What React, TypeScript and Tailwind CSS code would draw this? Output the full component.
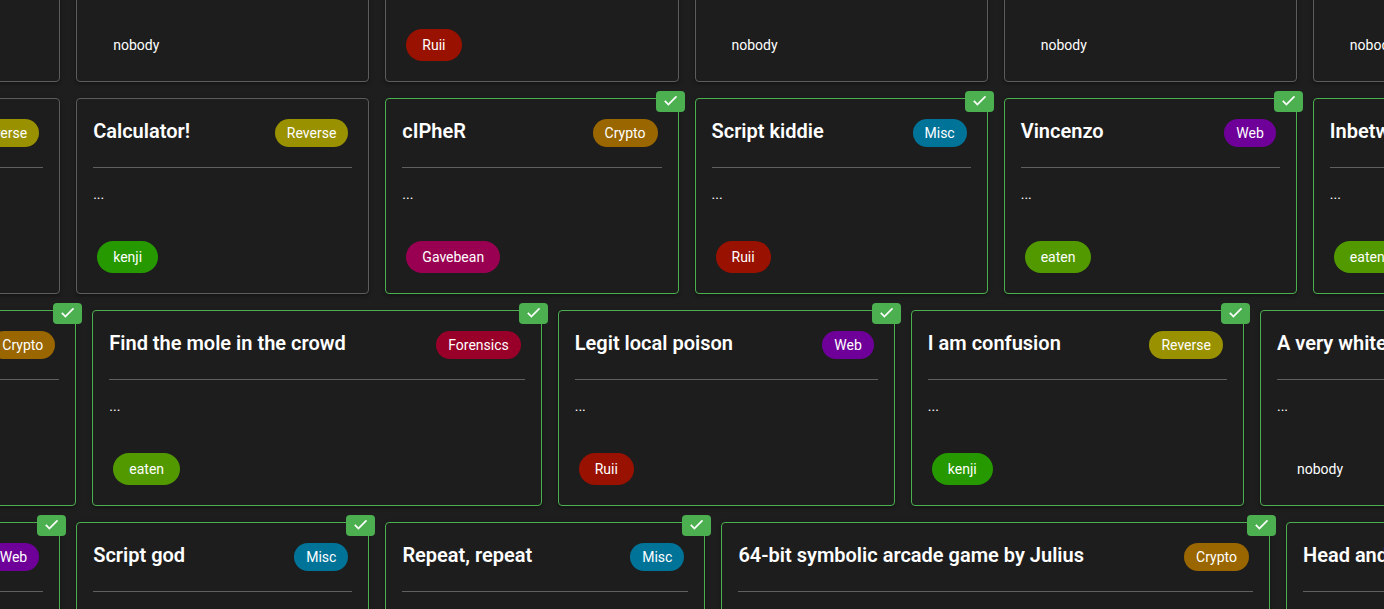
type Tag = { label: string; color: string };

const REVERSE: Tag = { label: 'Reverse', color: 'bg-[#999100]' };
const CRYPTO: Tag = { label: 'Crypto', color: 'bg-[#996600]' };
const MISC: Tag = { label: 'Misc', color: 'bg-[#007399]' };
const WEB: Tag = { label: 'Web', color: 'bg-[#6e0099]' };
const FORENSICS: Tag = { label: 'Forensics', color: 'bg-[#990029]' };

const NOBODY: Tag = { label: 'nobody', color: 'bg-transparent' };
const RUII: Tag = { label: 'Ruii', color: 'bg-[#991100]' };
const KENJI: Tag = { label: 'kenji', color: 'bg-[#269900]' };
const GAVEBEAN: Tag = { label: 'Gavebean', color: 'bg-[#990052]' };
const EATEN: Tag = { label: 'eaten', color: 'bg-[#529900]' };

type Challenge = {
  title?: string;
  category?: Tag;
  text?: string;
  author?: Tag;
  solved?: boolean;
  grow: string;
};

const rows: Challenge[][] = [
  [
    { grow: 'grow-[293]' },
    { author: NOBODY, grow: 'grow-[293]' },
    { author: RUII, grow: 'grow-[293]' },
    { author: NOBODY, grow: 'grow-[293]' },
    { author: NOBODY, grow: 'grow-[293]' },
    { author: NOBODY, grow: 'grow-[293]' },
  ],
  [
    { category: REVERSE, grow: 'grow-[293]' },
    { title: 'Calculator!', category: REVERSE, text: '...', author: KENJI, grow: 'grow-[293]' },
    { title: 'cIPheR', category: CRYPTO, text: '...', author: GAVEBEAN, solved: true, grow: 'grow-[293]' },
    { title: 'Script kiddie', category: MISC, text: '...', author: RUII, solved: true, grow: 'grow-[293]' },
    { title: 'Vincenzo', category: WEB, text: '...', author: EATEN, solved: true, grow: 'grow-[293]' },
    { title: 'Inbetween', text: '...', author: EATEN, solved: true, grow: 'grow-[293]' },
  ],
  [
    { category: CRYPTO, solved: true, grow: 'grow-[309]' },
    { title: 'Find the mole in the crowd', category: FORENSICS, text: '...', author: EATEN, solved: true, grow: 'grow-[450]' },
    { title: 'Legit local poison', category: WEB, text: '...', author: RUII, solved: true, grow: 'grow-[337]' },
    { title: 'I am confusion', category: REVERSE, text: '...', author: KENJI, solved: true, grow: 'grow-[333]' },
    { title: 'A very white', text: '...', author: NOBODY, solved: true, grow: 'grow-[346]' },
  ],
  [
    { category: WEB, solved: true, grow: 'grow-[293]' },
    { title: 'Script god', category: MISC, solved: true, grow: 'grow-[293]' },
    { title: 'Repeat, repeat', category: MISC, solved: true, grow: 'grow-[320]' },
    { title: '64-bit symbolic arcade game by Julius', category: CRYPTO, solved: true, grow: 'grow-[550]' },
    { title: 'Head and', solved: true, grow: 'grow-[320]' },
  ],
];

function SolvedBadge() {
  return (
    <span className="absolute -top-2 -right-[7px] flex h-[21px] items-start rounded bg-[#4caf50] px-1.5 pt-px">
      <svg viewBox="0 0 24 24" className="size-[17px] fill-white stroke-white stroke-[0.6]" role="img" aria-label="Solved">
        <path d="M9 16.17L4.83 12l-1.42 1.41L9 19 21 7l-1.41-1.41z" />
      </svg>
    </span>
  );
}

function Card({ title, category, text, author, solved, grow }: Challenge) {
  return (
    <article
      className={`relative min-w-0 basis-0 rounded border bg-[#1d1d1d] shadow-[0_1px_5px_rgba(0,0,0,0.2),0_2px_2px_rgba(0,0,0,0.14)] ${grow} ${
        solved ? 'border-[#4caf50]' : 'border-[#5c5c5c]'
      }`}
    >
      {solved && <SolvedBadge />}
      <div className="flex h-[68px] items-start justify-between p-4">
        <h2 className="text-xl/8 font-semibold whitespace-nowrap">{title}</h2>
        {category && (
          <span className={`m-1 flex h-7 items-center rounded-full px-3 ${category.color}`}>{category.label}</span>
        )}
      </div>
      <hr className="mx-4 border-[#606060]" />
      <p className="h-[53px] p-4 leading-[21px]">{text}</p>
      <div className="flex h-[72px] p-4">
        {author && (
          <a href="#author" className={`m-1 flex h-8 items-center rounded-full px-4 ${author.color}`}>
            {author.label}
          </a>
        )}
      </div>
    </article>
  );
}

export default function App() {
  return (
    <main className="h-screen overflow-hidden bg-[#1e1e1e] font-[Roboto,sans-serif] text-sm text-white">
      <div className="-mt-[114px] -mr-[222px] -ml-[233px] flex flex-col gap-4">
        {rows.map((row, i) => (
          <section key={i} className="flex gap-4">
            {row.map((challenge, j) => (
              <Card key={j} {...challenge} />
            ))}
          </section>
        ))}
      </div>
    </main>
  );
}
